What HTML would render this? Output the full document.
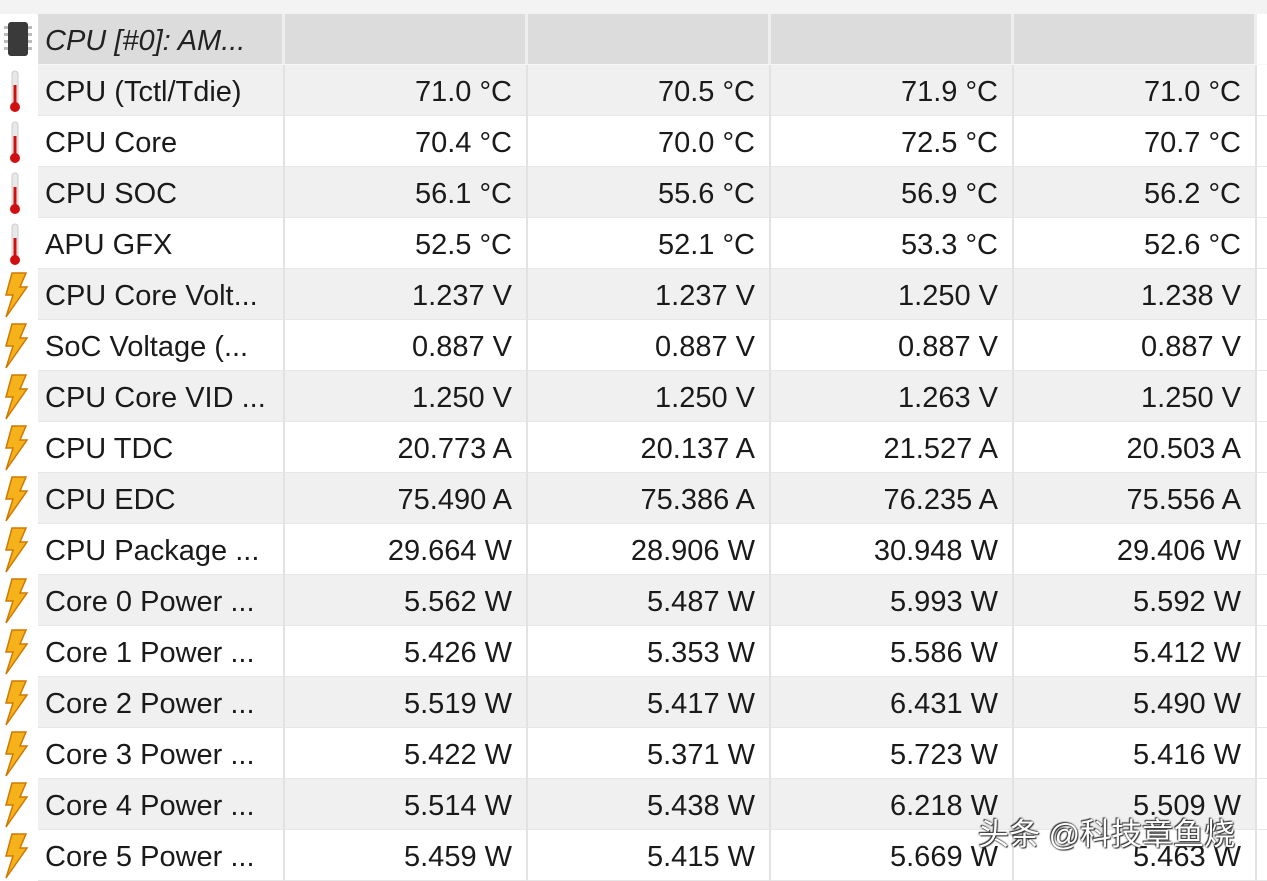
<!DOCTYPE html>
<html><head><meta charset="utf-8"><style>
*{margin:0;padding:0;box-sizing:border-box}
body{width:1267px;height:876px;overflow:hidden;background:#f7f7f7;font-family:"Liberation Sans","DejaVu Sans",sans-serif;color:#1a1a1a;position:relative}
.r{position:absolute;left:0;width:1267px;height:51px;display:flex}
.i{width:38px;height:51px;background:#fff;position:relative;flex:none}
.c{height:51px;font-size:29px;line-height:55px;border-right:2px solid #e2e2e2;border-bottom:1px solid #e6e6e6;white-space:nowrap;overflow:hidden;flex:none}
.n{width:247px;padding-left:7px}
.v{width:243px;text-align:right;padding-right:14px}
.e{flex:1;background:#fff;border-bottom:1px solid #e6e6e6}
.g .c{background:#f0f0f0}
.w .c{background:#fff}
.h .c{background:#dcdcdc;border-right:3px solid #eeeeee;border-bottom:none}
.h .n{font-style:italic;color:#222}
svg{position:absolute}
</style></head><body>
<div style="position:absolute;left:0;top:0;width:1267px;height:14px;background:#f3f3f3"></div>
<div class="r h" style="top:14px;height:50px">
<div class="i" style="background:#fff"><svg width="38" height="50" viewBox="0 0 38 50"><rect x="8" y="8" width="20" height="34" rx="3" fill="#3a3a3a"/><g fill="#bbb"><rect x="4" y="12" width="4" height="3"/><rect x="4" y="19" width="4" height="3"/><rect x="4" y="26" width="4" height="3"/><rect x="4" y="33" width="4" height="3"/><rect x="28" y="12" width="4" height="3"/><rect x="28" y="19" width="4" height="3"/><rect x="28" y="26" width="4" height="3"/><rect x="28" y="33" width="4" height="3"/></g></svg></div>
<div class="c n" style="height:50px;line-height:54px">CPU [#0]: AM...</div><div class="c v" style="height:50px"></div><div class="c v" style="height:50px"></div><div class="c v" style="height:50px"></div><div class="c v" style="height:50px"></div><div class="e" style="background:#fff;border:none"></div></div>

<svg width="0" height="0" style="position:absolute"><defs>
<symbol id="t" viewBox="0 0 38 51"><rect x="12" y="6" width="6" height="34" rx="3" fill="#e8e8e8" stroke="#ccc"/><rect x="13.5" y="20" width="3" height="22" fill="#d01010"/><circle cx="15" cy="42" r="5" fill="#d01010"/></symbol>
<symbol id="b" viewBox="0 0 38 51"><path d="M12 4 L26 4 L20 18 L27 18 L6 48 L13 26 L6 26 Z" fill="#f6b21a" stroke="#d07800" stroke-width="1.5"/></symbol>
</defs></svg>

<div class="r g" style="top:65px"><div class="i"><svg width="38" height="51"><use href="#t"/></svg></div><div class="c n">CPU (Tctl/Tdie)</div><div class="c v">71.0 °C</div><div class="c v">70.5 °C</div><div class="c v">71.9 °C</div><div class="c v">71.0 °C</div><div class="e"></div></div>
<div class="r w" style="top:116px"><div class="i"><svg width="38" height="51"><use href="#t"/></svg></div><div class="c n">CPU Core</div><div class="c v">70.4 °C</div><div class="c v">70.0 °C</div><div class="c v">72.5 °C</div><div class="c v">70.7 °C</div><div class="e"></div></div>
<div class="r g" style="top:167px"><div class="i"><svg width="38" height="51"><use href="#t"/></svg></div><div class="c n">CPU SOC</div><div class="c v">56.1 °C</div><div class="c v">55.6 °C</div><div class="c v">56.9 °C</div><div class="c v">56.2 °C</div><div class="e"></div></div>
<div class="r w" style="top:218px"><div class="i"><svg width="38" height="51"><use href="#t"/></svg></div><div class="c n">APU GFX</div><div class="c v">52.5 °C</div><div class="c v">52.1 °C</div><div class="c v">53.3 °C</div><div class="c v">52.6 °C</div><div class="e"></div></div>
<div class="r g" style="top:269px"><div class="i"><svg width="38" height="51"><use href="#b"/></svg></div><div class="c n">CPU Core Volt...</div><div class="c v">1.237 V</div><div class="c v">1.237 V</div><div class="c v">1.250 V</div><div class="c v">1.238 V</div><div class="e"></div></div>
<div class="r w" style="top:320px"><div class="i"><svg width="38" height="51"><use href="#b"/></svg></div><div class="c n">SoC Voltage (...</div><div class="c v">0.887 V</div><div class="c v">0.887 V</div><div class="c v">0.887 V</div><div class="c v">0.887 V</div><div class="e"></div></div>
<div class="r g" style="top:371px"><div class="i"><svg width="38" height="51"><use href="#b"/></svg></div><div class="c n">CPU Core VID ...</div><div class="c v">1.250 V</div><div class="c v">1.250 V</div><div class="c v">1.263 V</div><div class="c v">1.250 V</div><div class="e"></div></div>
<div class="r w" style="top:422px"><div class="i"><svg width="38" height="51"><use href="#b"/></svg></div><div class="c n">CPU TDC</div><div class="c v">20.773 A</div><div class="c v">20.137 A</div><div class="c v">21.527 A</div><div class="c v">20.503 A</div><div class="e"></div></div>
<div class="r g" style="top:473px"><div class="i"><svg width="38" height="51"><use href="#b"/></svg></div><div class="c n">CPU EDC</div><div class="c v">75.490 A</div><div class="c v">75.386 A</div><div class="c v">76.235 A</div><div class="c v">75.556 A</div><div class="e"></div></div>
<div class="r w" style="top:524px"><div class="i"><svg width="38" height="51"><use href="#b"/></svg></div><div class="c n">CPU Package ...</div><div class="c v">29.664 W</div><div class="c v">28.906 W</div><div class="c v">30.948 W</div><div class="c v">29.406 W</div><div class="e"></div></div>
<div class="r g" style="top:575px"><div class="i"><svg width="38" height="51"><use href="#b"/></svg></div><div class="c n">Core 0 Power ...</div><div class="c v">5.562 W</div><div class="c v">5.487 W</div><div class="c v">5.993 W</div><div class="c v">5.592 W</div><div class="e"></div></div>
<div class="r w" style="top:626px"><div class="i"><svg width="38" height="51"><use href="#b"/></svg></div><div class="c n">Core 1 Power ...</div><div class="c v">5.426 W</div><div class="c v">5.353 W</div><div class="c v">5.586 W</div><div class="c v">5.412 W</div><div class="e"></div></div>
<div class="r g" style="top:677px"><div class="i"><svg width="38" height="51"><use href="#b"/></svg></div><div class="c n">Core 2 Power ...</div><div class="c v">5.519 W</div><div class="c v">5.417 W</div><div class="c v">6.431 W</div><div class="c v">5.490 W</div><div class="e"></div></div>
<div class="r w" style="top:728px"><div class="i"><svg width="38" height="51"><use href="#b"/></svg></div><div class="c n">Core 3 Power ...</div><div class="c v">5.422 W</div><div class="c v">5.371 W</div><div class="c v">5.723 W</div><div class="c v">5.416 W</div><div class="e"></div></div>
<div class="r g" style="top:779px"><div class="i"><svg width="38" height="51"><use href="#b"/></svg></div><div class="c n">Core 4 Power ...</div><div class="c v">5.514 W</div><div class="c v">5.438 W</div><div class="c v">6.218 W</div><div class="c v">5.509 W</div><div class="e"></div></div>
<div class="r w" style="top:830px"><div class="i"><svg width="38" height="51"><use href="#b"/></svg></div><div class="c n">Core 5 Power ...</div><div class="c v">5.459 W</div><div class="c v">5.415 W</div><div class="c v">5.669 W</div><div class="c v">5.463 W</div><div class="e"></div></div>

<div style="position:absolute;left:978px;top:816px;font-size:31px;line-height:38px;color:#fff;font-family:'Liberation Sans','Noto Sans CJK SC',sans-serif;text-shadow:0 0 2px #333,1px 1px 1px #333,-1px -1px 1px #333">头条 @科技章鱼烧</div>
</body></html>
